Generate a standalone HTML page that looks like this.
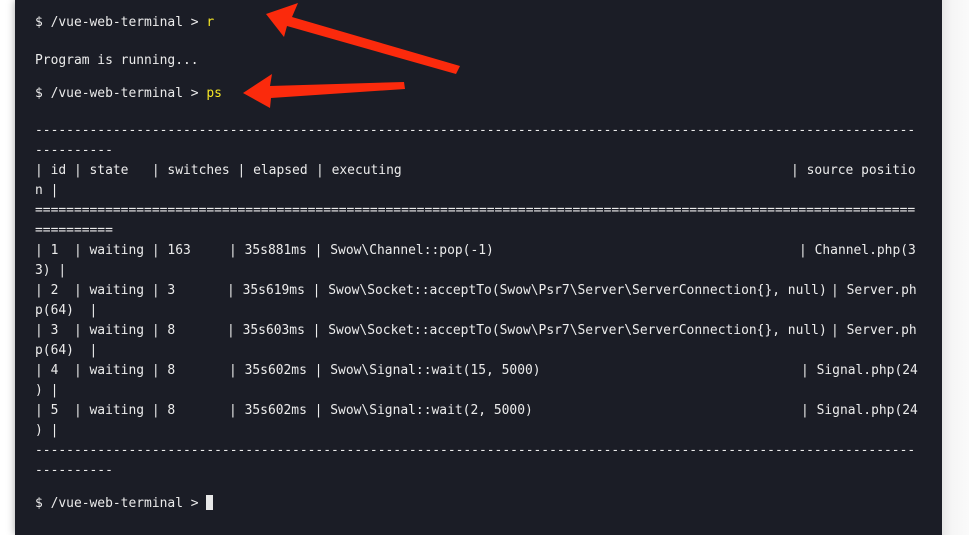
<!DOCTYPE html>
<html><head><meta charset="utf-8"><style>
html,body{margin:0;padding:0;background:#fff;width:969px;height:535px;overflow:hidden;position:relative}
#t{position:absolute;left:15px;top:0;width:927px;height:535px;background:#1b1d26;box-shadow:0 0 8px rgba(0,0,0,.35)}
.l{position:absolute;font-family:"DejaVu Sans Mono",monospace;font-size:12.95px;line-height:20px;color:#ececec;white-space:pre;letter-spacing:0;margin-top:1px}
.y{color:#f5e625}
#r{position:absolute;left:942px;top:0;width:27px;height:535px;background:linear-gradient(90deg,#e6e6e6,#f6f6f6 10px,#fafafa)}
</style></head><body>
<div id="t"></div><div id="r"></div>
<div class="l" style="left:35px;top:12px">$ /vue-web-terminal &gt; <span class="y">r</span></div>
<div class="l" style="left:35px;top:50px">Program is running...</div>
<div class="l" style="left:35px;top:83px">$ /vue-web-terminal &gt; <span class="y">ps</span></div>
<div class="l" style="left:35px;top:120px">-----------------------------------------------------------------------------------------------------------------</div>
<div class="l" style="left:35px;top:140px">----------</div>
<div class="l" style="left:35px;top:160px">| id | state   | switches | elapsed</div>
<div class="l" style="left:316px;top:160px">| executing</div>
<div class="l" style="left:791px;top:160px">| source positio</div>
<div class="l" style="left:35px;top:180px">n |</div>
<div class="l" style="left:35px;top:200px">=================================================================================================================</div>
<div class="l" style="left:35px;top:220px">==========</div>

<div class="l" style="left:35px;top:240px">| 1  | waiting | 163</div>
<div class="l" style="left:229px;top:240px">| 35s881ms | Swow\Channel::pop(-1)</div>
<div class="l" style="left:799px;top:240px">| Channel.php(3</div>
<div class="l" style="left:35px;top:260px">3) |</div>

<div class="l" style="left:35px;top:280px">| 2  | waiting | 3</div>
<div class="l" style="left:227px;top:280px">| 35s619ms | Swow\Socket::acceptTo(Swow\Psr7\Server\ServerConnection{}, null)</div>
<div class="l" style="left:831px;top:280px">| Server.ph</div>
<div class="l" style="left:35px;top:300px">p(64)  |</div>

<div class="l" style="left:35px;top:320px">| 3  | waiting | 8</div>
<div class="l" style="left:227px;top:320px">| 35s603ms | Swow\Socket::acceptTo(Swow\Psr7\Server\ServerConnection{}, null)</div>
<div class="l" style="left:831px;top:320px">| Server.ph</div>
<div class="l" style="left:35px;top:340px">p(64)  |</div>

<div class="l" style="left:35px;top:360px">| 4  | waiting | 8</div>
<div class="l" style="left:229px;top:360px">| 35s602ms | Swow\Signal::wait(15, 5000)</div>
<div class="l" style="left:801px;top:360px">| Signal.php(24</div>
<div class="l" style="left:35px;top:380px">) |</div>

<div class="l" style="left:35px;top:400px">| 5  | waiting | 8</div>
<div class="l" style="left:229px;top:400px">| 35s602ms | Swow\Signal::wait(2, 5000)</div>
<div class="l" style="left:801px;top:400px">| Signal.php(24</div>
<div class="l" style="left:35px;top:420px">) |</div>

<div class="l" style="left:35px;top:440px">-----------------------------------------------------------------------------------------------------------------</div>
<div class="l" style="left:35px;top:460px">----------</div>
<div class="l" style="left:35px;top:493px">$ /vue-web-terminal &gt; <span style="display:inline-block;width:7px;height:15px;background:#e8e8e8;vertical-align:-3px"></span></div>

<svg style="position:absolute;left:0;top:0" width="969" height="535">
<g fill="#fb2a0c">
<polygon points="266,14 298,3 292,17 460,66 456,74 287,26 284,37"/>
<polygon points="243,93 272,74 270,86 404,82 405,89 271,98 270,108"/>
</g>
</svg>
</body></html>
